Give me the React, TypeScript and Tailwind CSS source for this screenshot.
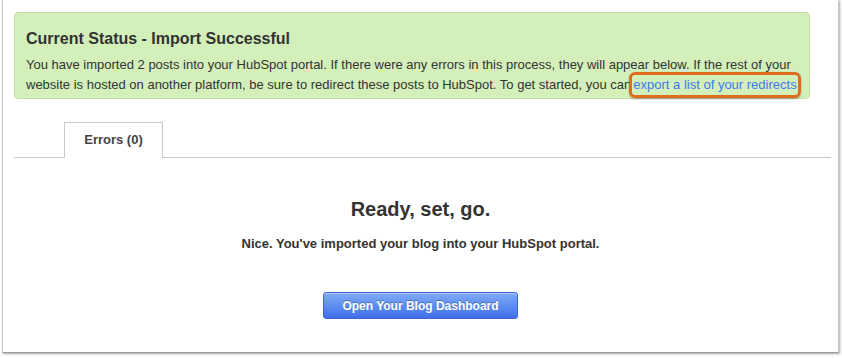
import React from 'react';

const App: React.FC = () => {
  return (
    <div className="w-[842px] h-[358px] bg-white font-['Liberation_Sans',Arial,sans-serif] text-[#333]">
      <div className="ml-[2px] w-[837px] h-[353px] border-x border-b border-[#c8c8c8] border-b-[#9a9a9a] shadow-[1px_1px_2px_rgba(0,0,0,0.35)] bg-white pt-[12px]">
        {/* status banner */}
        <div className="ml-[11px] w-[796px] h-[87px] rounded-[4px] border border-[#c3dfa6] bg-[#d3efba] px-[11px] pt-[16px]">
          <h2 className="text-[16px] leading-[20px] font-bold text-[#333]">Current Status - Import Successful</h2>
          <p className="mt-[6px] text-[13px] leading-[20px] text-[#333]">
            You have imported 2 posts into your HubSpot portal. If there were any errors in this process, they will appear below. If the rest of your
            <br />
            website is hosted on another platform, be sure to redirect these posts to HubSpot. To get started, you can
            <span className="relative inline-block ml-[2px]">
              <a href="#" className="text-[#3f78ef]">export a list of your redirects</a>
              <span className="absolute -left-[4px] -right-[4px] -top-[3px] -bottom-[3px] rounded-[6px] border-[3px] border-[#e06c22] shadow-[0_1px_2px_rgba(0,0,0,0.3)]" />
            </span>
          </p>
        </div>

        {/* tabs */}
        <div className="mt-[23px] ml-[11px] w-[817px] h-[36px] flex items-end border-b border-[#c8c8c8]">
          <div className="ml-[50px] w-[99px] h-[36px] -mb-px border border-b-0 border-[#c8c8c8] bg-white flex items-center justify-center pb-[1px]">
            <span className="text-[13px] font-bold text-[#444]">Errors (0)</span>
          </div>
        </div>

        {/* empty state */}
        <div className="flex flex-col items-center">
          <h1 className="mt-[39px] text-[20px] leading-[24px] font-bold text-[#333]">Ready, set, go.</h1>
          <p className="mt-[15px] text-[13px] leading-[16px] font-bold text-[#333]">
            Nice. You've imported your blog into your HubSpot portal.
          </p>
          <button className="mt-[40px] w-[195px] h-[27px] rounded-[3px] border border-[#3c64d8] bg-gradient-to-b from-[#80acf7] to-[#3f6ee8] text-white text-[12px] font-bold [text-shadow:0_-1px_0_rgba(0,0,0,0.3)] shadow-[inset_0_1px_0_rgba(255,255,255,0.35)]">
            Open Your Blog Dashboard
          </button>
        </div>
      </div>
    </div>
  );
};

export default App;
